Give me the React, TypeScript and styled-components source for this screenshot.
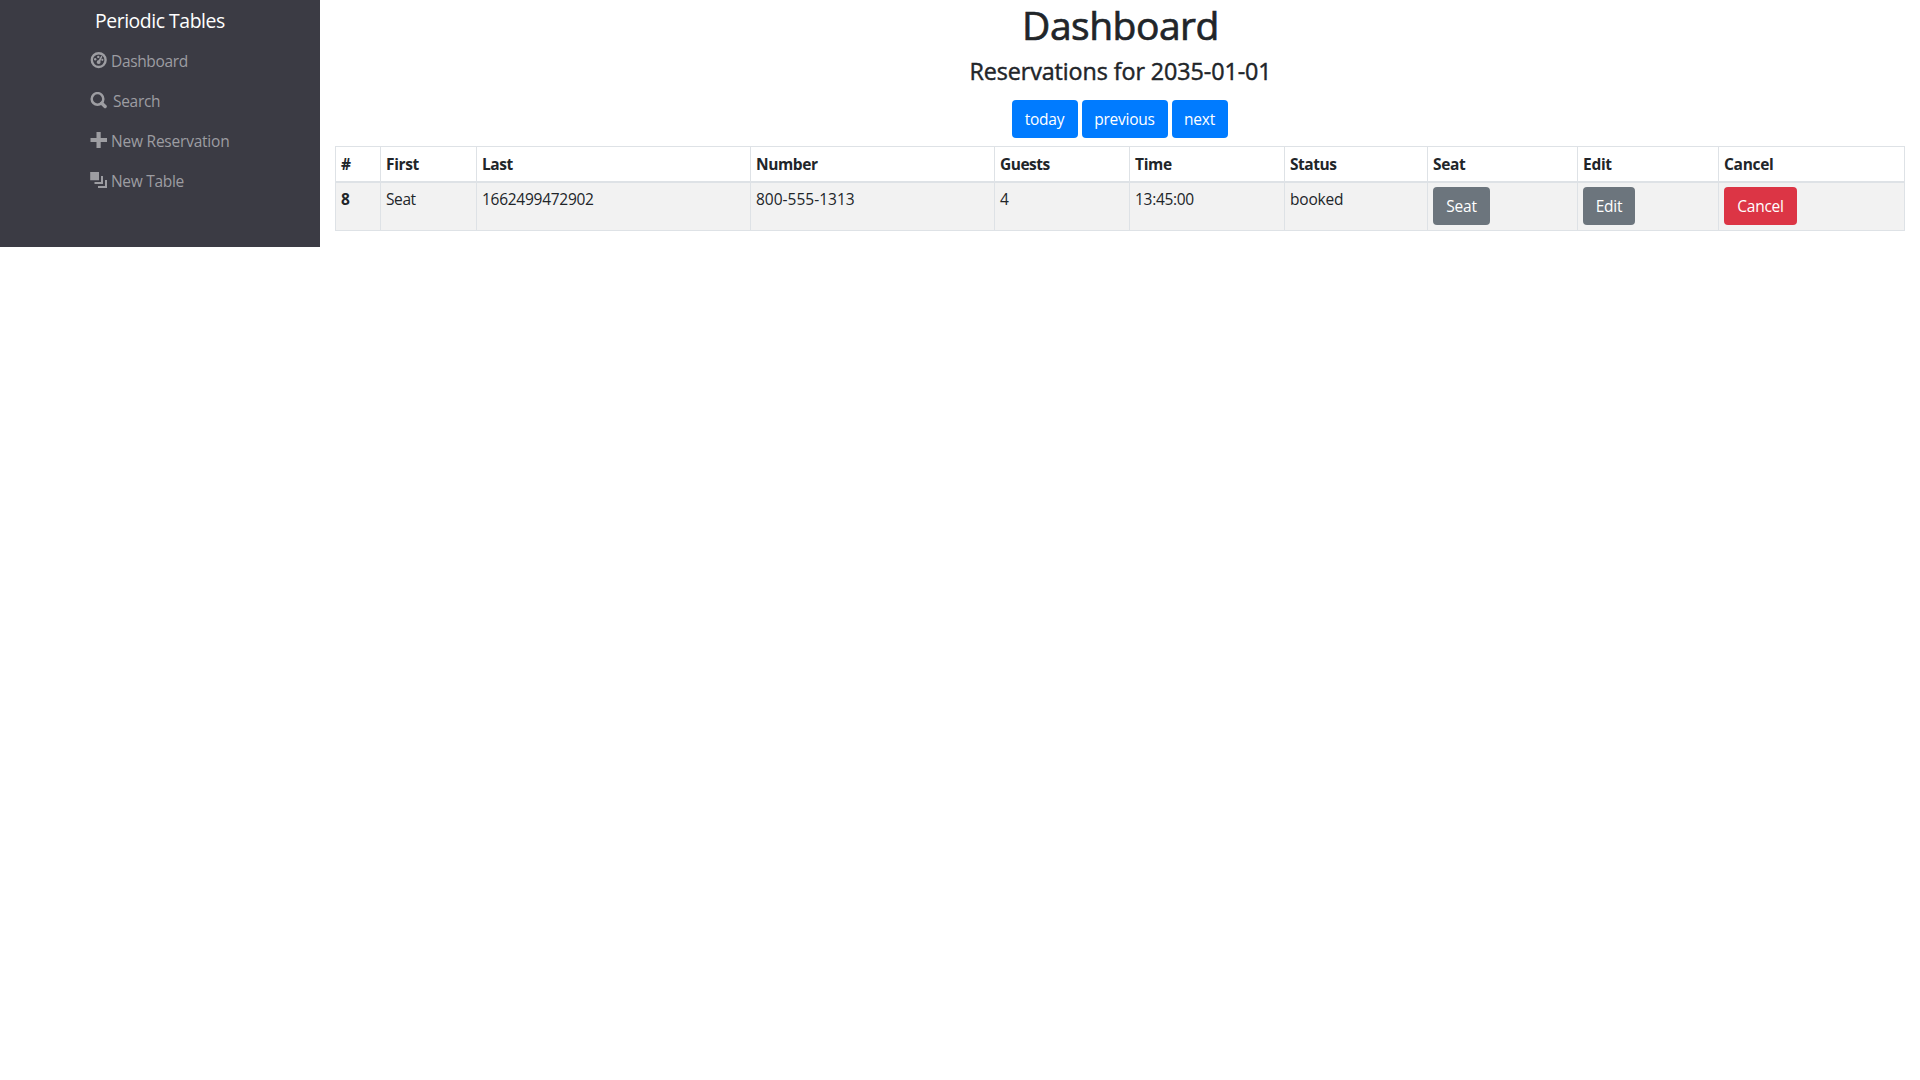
import React from "react";
import styled, { createGlobalStyle } from "styled-components";

const GlobalStyle = createGlobalStyle`
  *, *::before, *::after { box-sizing: border-box; }
  body {
    margin: 0;
    background: #fff;
    color: #212529;
    font-family: "Segoe UI", "Open Sans", "Noto Sans", sans-serif;
    font-size: 15.5px;
    line-height: 24px;
  }
`;

const Page = styled.div`
  display: flex;
  align-items: flex-start;
`;

const Sidebar = styled.nav`
  flex: 0 0 320px;
  height: 247px;
  padding: 6px 0 0 90px;
  background: #3b3b44;
`;

const Brand = styled.a`
  display: block;
  padding-left: 5px;
  height: 34px;
  line-height: 30px;
  font-size: 19.4px;
  letter-spacing: -0.45px;
  color: #fff;
  white-space: nowrap;
`;

const NavList = styled.ul`
  list-style: none;
  margin: 0;
  padding: 0;
`;

const NavItem = styled.li<{ $gap: number; $track: number }>`
  display: flex;
  height: 40px;
  padding-top: 9px;
  gap: ${(p) => p.$gap}px;
  color: #9d9da2;
  letter-spacing: ${(p) => p.$track}px;
  white-space: nowrap;

  svg {
    flex: none;
    margin-top: 3px;
  }
`;

const Main = styled.main`
  flex: 1;
  padding: 0 15px;
`;

const Title = styled.h1`
  margin: 0 0 8px;
  font-size: 39px;
  font-weight: 500;
  line-height: 50px;
  height: 48px;
  padding-left: 1px;
  letter-spacing: -0.5px;
  text-align: center;
  -webkit-text-stroke: 0.7px currentColor;
`;

const Subtitle = styled.h4`
  margin: 0 0 15px;
  height: 29px;
  padding-left: 1px;
  font-size: 23.3px;
  font-weight: 500;
  line-height: 31px;
  letter-spacing: -0.08px;
  text-align: center;
  -webkit-text-stroke: 0.45px currentColor;
`;

const DateControls = styled.div`
  display: flex;
  justify-content: center;
  gap: 4px;
  margin-bottom: 8px;
  padding-right: 1px;
`;

const tones = { primary: "#007bff", secondary: "#6c757d", danger: "#dc3545" };

const Button = styled.button<{ $tone: keyof typeof tones; $width: number; $track?: number }>`
  display: block;
  width: ${(p) => p.$width}px;
  height: 38px;
  padding: 0;
  border: 0;
  border-radius: 4px;
  background: ${(p) => tones[p.$tone]};
  color: #fff;
  font: inherit;
  letter-spacing: ${(p) => p.$track ?? -0.25}px;
  text-align: center;
  white-space: nowrap;
`;

const Table = styled.table`
  width: 1569px;
  table-layout: fixed;
  border-collapse: collapse;
  border: 1px solid #dee2e6;
`;

const HeadCell = styled.th<{ $track: number }>`
  height: 35px;
  padding: 4px 5px 4px;
  border: 1px solid #dee2e6;
  border-bottom-width: 2px;
  font-weight: 700;
  letter-spacing: ${(p) => p.$track}px;
  text-align: left;
`;

const Row = styled.tr`
  background: #f2f2f2;
`;

const Cell = styled.td<{ $track?: number; $strong?: boolean }>`
  height: 48px;
  padding: 4px 5px 5px;
  border: 1px solid #dee2e6;
  font-weight: ${(p) => (p.$strong ? 700 : 400)};
  letter-spacing: ${(p) => p.$track ?? 0}px;
  vertical-align: top;
`;

const columns = [
  { label: "#", width: 45, track: 0 },
  { label: "First", width: 96, track: -0.35 },
  { label: "Last", width: 274, track: -0.4 },
  { label: "Number", width: 244, track: -0.4 },
  { label: "Guests", width: 135, track: -0.5 },
  { label: "Time", width: 155, track: -0.3 },
  { label: "Status", width: 143, track: -0.45 },
  { label: "Seat", width: 150, track: -0.35 },
  { label: "Edit", width: 141, track: -0.3 },
  { label: "Cancel", width: 186, track: -0.3 },
];

const DashboardIcon = () => (
  <svg width="17" height="17" viewBox="0 0 17 17" fill="currentColor">
    <circle cx="8.7" cy="8.1" r="6.9" fill="none" stroke="currentColor" strokeWidth="2.4" />
    <circle cx="5.2" cy="7.2" r="1.2" />
    <circle cx="8.3" cy="4.9" r="1.2" />
    <circle cx="12.3" cy="7.8" r="1.1" />
    <path d="M11.4 3.8l1 .8-2 4.3c.5 1.8-.3 3-1.7 3-1.5 0-2.4-1.2-1.8-2.5.2-.7.9-1 1.6-1.1z" />
  </svg>
);

const SearchIcon = () => (
  <svg width="17" height="17" viewBox="0 0 17 17" fill="none" stroke="currentColor">
    <circle cx="7.5" cy="6.9" r="5.8" strokeWidth="2.5" />
    <path d="M11.7 11.2l3.4 3.3" strokeWidth="3.4" strokeLinecap="round" />
  </svg>
);

const PlusIcon = () => (
  <svg width="17" height="17" viewBox="0 0 17 17" fill="currentColor">
    <path d="M6.5 0h4.2v6H17v4h-6.3v6H6.5v-6H.5V6h6z" />
  </svg>
);

const LayersIcon = () => (
  <svg width="17" height="17" viewBox="0 0 17 17" fill="currentColor">
    <path d="M.2 0h8.8v8.2H.2zM11 4h2v8H4.5v-2H11zM15 8h2v8H8v-2h7z" />
  </svg>
);

const links = [
  { label: "Dashboard", icon: <DashboardIcon />, gap: 4, track: -0.35 },
  { label: "Search", icon: <SearchIcon />, gap: 6, track: -0.3 },
  { label: "New Reservation", icon: <PlusIcon />, gap: 4, track: -0.22 },
  { label: "New Table", icon: <LayersIcon />, gap: 4, track: -0.3 },
];

export default function App() {
  return (
    <>
      <GlobalStyle />
      <Page>
        <Sidebar>
          <Brand>Periodic Tables</Brand>
          <NavList>
            {links.map((l) => (
              <NavItem key={l.label} $gap={l.gap} $track={l.track}>
                {l.icon}
                <span>{l.label}</span>
              </NavItem>
            ))}
          </NavList>
        </Sidebar>
        <Main>
          <Title>Dashboard</Title>
          <Subtitle>Reservations for 2035-01-01</Subtitle>
          <DateControls>
            <Button $tone="primary" $width={66}>today</Button>
            <Button $tone="primary" $width={86}>previous</Button>
            <Button $tone="primary" $width={56}>next</Button>
          </DateControls>
          <Table>
            <colgroup>
              {columns.map((c) => (
                <col key={c.label} width={c.width} />
              ))}
            </colgroup>
            <thead>
              <tr>
                {columns.map((c) => (
                  <HeadCell key={c.label} $track={c.track}>{c.label}</HeadCell>
                ))}
              </tr>
            </thead>
            <tbody>
              <Row>
                <Cell $strong>8</Cell>
                <Cell $track={-0.4}>Seat</Cell>
                <Cell $track={-0.27}>1662499472902</Cell>
                <Cell $track={0}>800-555-1313</Cell>
                <Cell>4</Cell>
                <Cell $track={-0.3}>13:45:00</Cell>
                <Cell $track={-0.2}>booked</Cell>
                <Cell><Button $tone="secondary" $width={57}>Seat</Button></Cell>
                <Cell><Button $tone="secondary" $width={52}>Edit</Button></Cell>
                <Cell><Button $tone="danger" $width={73}>Cancel</Button></Cell>
              </Row>
            </tbody>
          </Table>
        </Main>
      </Page>
    </>
  );
}
